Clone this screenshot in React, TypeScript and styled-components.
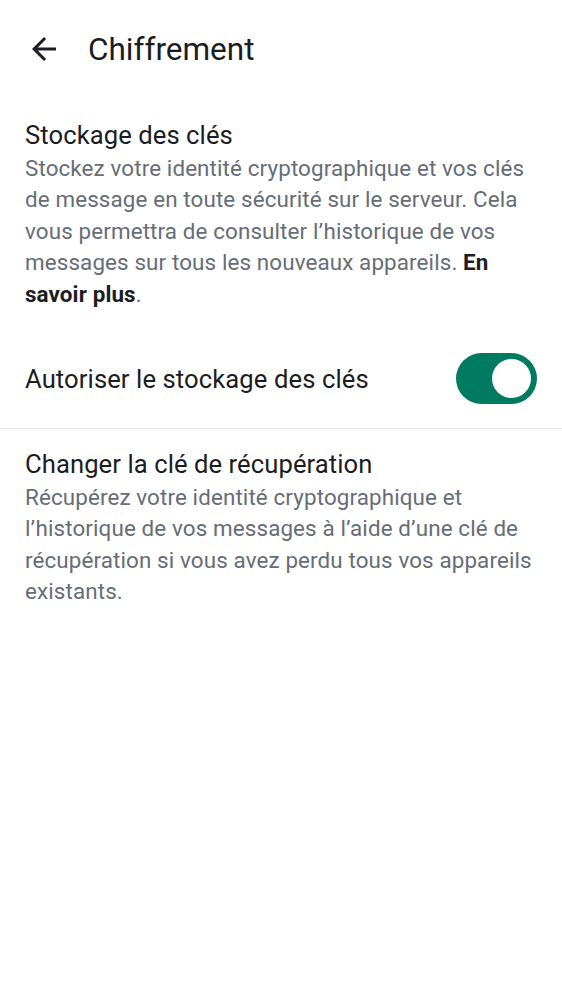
import React, { useState } from "react";
import styled, { createGlobalStyle } from "styled-components";

const Global = createGlobalStyle`
  html, body { margin: 0; padding: 0; background: #ffffff; }
  body { font-family: Roboto, "Noto Sans", sans-serif; -webkit-font-smoothing: antialiased; }
`;

const Screen = styled.div`
  width: 562px;
  min-height: 1000px;
  background: #ffffff;
  color: #1b1d22;
`;

const TopBar = styled.header`
  display: flex;
  align-items: center;
  height: 98px;
  padding: 0 0 0 26px;
  box-sizing: border-box;
`;

const BackButton = styled.button`
  width: 36px;
  height: 36px;
  display: flex;
  align-items: center;
  justify-content: center;
  background: none;
  border: none;
  padding: 0;
  margin-right: 26px;
  color: #1b1d22;
  cursor: pointer;
`;

const Title = styled.h1`
  margin: 0;
  font-size: 31.5px;
  font-weight: 400;
  letter-spacing: 0;
  color: #1b1d22;
`;

const Item = styled.div<{ $top: number }>`
  padding: ${p => p.$top}px 25px 20px 25px;
`;

const ItemTitle = styled.div`
  font-size: 25.6px;
  line-height: 36px;
  letter-spacing: 0.08px;
  color: #1b1d22;
`;

const ItemText = styled.div`
  font-size: 22.4px;
  line-height: 31.4px;
  letter-spacing: 0.12px;
  color: #656d77;
  b { color: #1b1d22; font-weight: 700; }
`;

const SwitchRow = styled.div`
  display: flex;
  align-items: center;
  justify-content: space-between;
  padding: 23px 25px 24px 25px;
`;

const SwitchLabel = styled.span`
  font-size: 25.6px;
  letter-spacing: 0.1px;
  color: #1b1d22;
`;

const Track = styled.button<{ $on: boolean }>`
  width: 81px;
  height: 51px;
  border-radius: 26px;
  border: none;
  padding: 0 6px;
  display: flex;
  align-items: center;
  justify-content: ${p => (p.$on ? "flex-end" : "flex-start")};
  background: ${p => (p.$on ? "#007a61" : "#c8ccd2")};
  cursor: pointer;
  box-sizing: border-box;
`;

const Thumb = styled.span`
  width: 39px;
  height: 39px;
  border-radius: 50%;
  background: #ffffff;
`;

const Divider = styled.hr`
  margin: 0;
  border: none;
  height: 1px;
  background: #e6e6ee;
`;

export default function App() {
  const [on, setOn] = useState(true);
  return (
    <>
      <Global />
      <Screen>
        <TopBar>
          <BackButton aria-label="Retour">
            <svg width="36" height="36" viewBox="0 0 24 24" fill="#1b1d22">
              <path d="M20 11H7.83l5.59-5.59L12 4l-8 8 8 8 1.41-1.41L7.83 13H20v-2z" />
            </svg>
          </BackButton>
          <Title>Chiffrement</Title>
        </TopBar>
        <Item $top={19}>
          <ItemTitle>Stockage des clés</ItemTitle>
          <ItemText>
            Stockez votre identité cryptographique et vos clés de message en toute sécurité sur le serveur. Cela vous permettra de consulter l’historique de vos messages sur tous les nouveaux appareils. <b>En savoir plus</b>.
          </ItemText>
        </Item>
        <SwitchRow>
          <SwitchLabel>Autoriser le stockage des clés</SwitchLabel>
          <Track $on={on} onClick={() => setOn(!on)} aria-pressed={on}>
            <Thumb />
          </Track>
        </SwitchRow>
        <Divider />
        <Item $top={17}>
          <ItemTitle>Changer la clé de récupération</ItemTitle>
          <ItemText>
            Récupérez votre identité cryptographique et l’historique de vos messages à l’aide d’une clé de récupération si vous avez perdu tous vos appareils existants.
          </ItemText>
        </Item>
      </Screen>
    </>
  );
}
